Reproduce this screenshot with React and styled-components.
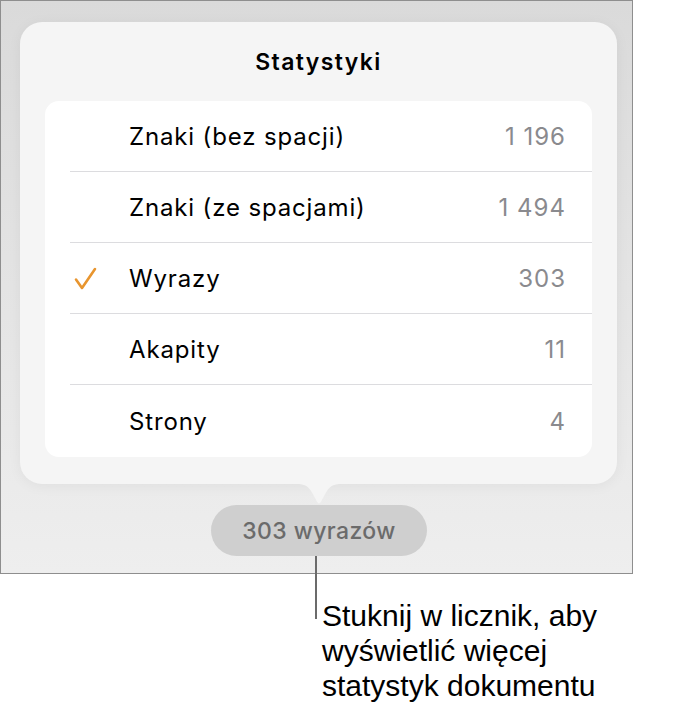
import React from 'react';
import styled, { createGlobalStyle } from 'styled-components';

const GlobalStyle = createGlobalStyle`
  html, body {
    margin: 0;
    padding: 0;
    background: #ffffff;
  }
  body {
    font-family: Inter, "Noto Sans", sans-serif;
  }
`;

const stats = [
  { label: 'Znaki (bez spacji)', value: '1 196' },
  { label: 'Znaki (ze spacjami)', value: '1 494' },
  { label: 'Wyrazy', value: '303', checked: true },
  { label: 'Akapity', value: '11' },
  { label: 'Strony', value: '4' },
];

const CheckIcon = () => (
  <svg width="26" height="26" viewBox="0 0 26 26">
    <path d="M3 13.5 L9 22 L22 3" fill="none" stroke="#e8952f" strokeWidth="2.6" strokeLinecap="round" strokeLinejoin="round" />
  </svg>
);

const App = () => (
  <Page>
    <GlobalStyle />
    <Frame>
      <Panel>
        <Title>Statystyki</Title>
        <Card>
          {stats.map((s, i) => (
            <Row key={s.label} last={i === stats.length - 1}>
              <CheckCell>{s.checked && <CheckIcon />}</CheckCell>
              <Label>{s.label}</Label>
              <Value>{s.value}</Value>
            </Row>
          ))}
        </Card>
        <Pointer width="46" height="22" viewBox="0 0 46 22">
          <path d="M0 0 C9 0 12 2 16 8.5 L21 17.8 Q23 21 25 17.8 L30 8.5 C34 2 37 0 46 0 Z" fill="#f5f5f5" />
        </Pointer>
      </Panel>
      <Counter>303 wyrazów</Counter>
      <Leader />
    </Frame>
    <Note>
      Stuknij w licznik, aby
      <br />
      wyświetlić więcej
      <br />
      statystyk dokumentu
    </Note>
  </Page>
);

const Page = styled.div`
  width: 686px;
  height: 705px;
  overflow: hidden;
`;

const Frame = styled.div`
  position: relative;
  width: 633px;
  height: 574px;
  box-sizing: border-box;
  border: 1px solid #8e8e8e;
  background: linear-gradient(#dadada, #eeeeee);
  padding: 21px 15px 0 19px;
  display: flex;
  flex-direction: column;
  align-items: flex-start;
`;

const Panel = styled.div`
  position: relative;
  width: 597px;
  height: 462px;
  box-sizing: border-box;
  background: #f5f5f5;
  border-radius: 22px;
  box-shadow: 0 2px 14px rgba(0, 0, 0, 0.05);
  display: flex;
  flex-direction: column;
`;

const Title = styled.div`
  height: 79px;
  display: flex;
  align-items: center;
  justify-content: center;
  font-size: 23px;
  font-weight: 600;
  letter-spacing: 1.4px;
  color: #000;
`;

const Card = styled.div`
  margin: 0 25px;
  background: #ffffff;
  border-radius: 14px;
  overflow: hidden;
`;

const Row = styled.div`
  height: ${(p) => (p.last ? 72 : 71)}px;
  box-sizing: border-box;
  margin-left: 25px;
  padding-right: 26px;
  display: grid;
  grid-template-columns: 59px 1fr auto;
  align-items: center;
  border-bottom: ${(p) => (p.last ? 'none' : '1px solid #dcdcdf')};
`;

const CheckCell = styled.div`
  display: flex;
  align-items: center;
  padding-left: 3px;
  padding-top: 2px;
`;

const Label = styled.div`
  font-size: 24px;
  letter-spacing: 0.85px;
  color: #000;
`;

const Value = styled.div`
  font-size: 24px;
  letter-spacing: 1px;
  color: #8a8a8e;
`;

const Pointer = styled.svg`
  position: absolute;
  left: 276px;
  top: 100%;
  display: block;
`;

const Counter = styled.div`
  margin-top: 21px;
  margin-left: 191px;
  width: 216px;
  height: 51px;
  border-radius: 26px;
  background: #cfcfcf;
  color: #6b6b6b;
  font-size: 23px;
  font-weight: 500;
  letter-spacing: 0.4px;
  display: flex;
  align-items: center;
  justify-content: center;
`;

const Leader = styled.div`
  position: absolute;
  left: 314px;
  top: 555px;
  width: 2px;
  height: 63px;
  background: #6b6b6b;
`;

const Note = styled.div`
  margin: 24px 0 0 322px;
  font-family: "Liberation Sans", Arial, sans-serif;
  font-size: 30px;
  line-height: 35px;
  color: #000;
`;

export default App;
